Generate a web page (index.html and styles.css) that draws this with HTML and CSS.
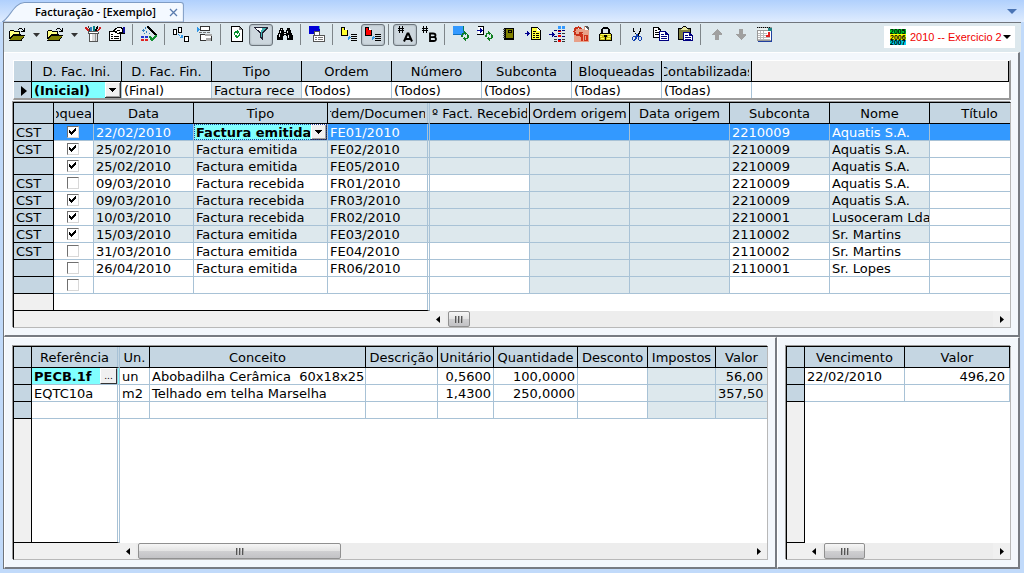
FILE: index.html
```html
<!DOCTYPE html>
<html lang="pt">
<head>
<meta charset="utf-8">
<title>Facturação - [Exemplo]</title>
<link rel="stylesheet" href="styles.css">
</head>
<body>
<header class="tabs">
  <div class="tab">
    <svg class="tab-shape" viewBox="0 0 180 20" preserveAspectRatio="none" aria-hidden="true"><path d="M0 20C7 17 12 1 22 .5H177Q179.500 .5 179.500 3V20z" fill="#f4f9ff" stroke="#7f9cc4"/></svg>
    <span class="tab-title">Facturação - [Exemplo]</span>
    <button class="tab-close" aria-label="Fechar"><svg width="9" height="9" viewBox="0 0 9 9"><path d="M1 1l7 7M8 1L1 8" stroke="#5a7cae" stroke-width="1.300"/></svg></button>
  </div>
  <button class="tab-menu" aria-label="Janelas"><svg width="10" height="5" viewBox="0 0 10 5"><path d="M0 0h10L5 5z" fill="#4a74b4"/></svg></button>
</header>
<main class="frame">
  <div class="toolbar" role="toolbar">
    <button class="tool" aria-label="Abrir"><svg class="icon" viewBox="0 0 16 16"><path d="M0 5h1V4h4v1h6v3h1v1h-8v1H3v1H2v1H1v1H0z" fill="#000"/><path d="M1 5h4v1h5v2H4v1H3v1H2v1H1z" fill="#ffff80"/><path d="M4 9h12v1h-1v2h-1v1h-1v2H0v-1h1v-2h1v-1h1v-1h1z" fill="#000"/><path d="M4 10h11l-3 4H1z" fill="#808000"/><path d="M9 4V3h1V2h3v1h1v1h1V2h1v4h-4V5h2V4h-1V3h-3v1z" fill="#000"/></svg></button>
    <button class="drop" aria-label="Opções de abrir"><svg width="7" height="4" viewBox="0 0 7 4"><path d="M0 0h7L3.500 4z" fill="#333"/></svg></button>
    <button class="tool" aria-label="Abrir obra"><svg class="icon" viewBox="0 0 16 16"><path d="M0 5h1V4h4v1h6v3h1v1h-8v1H3v1H2v1H1v1H0z" fill="#000"/><path d="M1 5h4v1h5v2H4v1H3v1H2v1H1z" fill="#ffff80"/><path d="M4 9h12v1h-1v2h-1v1h-1v2H0v-1h1v-2h1v-1h1v-1h1z" fill="#000"/><path d="M4 10h11l-3 4H1z" fill="#808000"/><path d="M9 4V3h1V2h3v1h1v1h1V2h1v4h-4V5h2V4h-1V3h-3v1z" fill="#000"/></svg></button>
    <button class="drop" aria-label="Opções de obra"><svg width="7" height="4" viewBox="0 0 7 4"><path d="M0 0h7L3.500 4z" fill="#333"/></svg></button>
    <button class="tool" aria-label="Configuração"><svg class="icon" viewBox="0 0 16 16"><path d="M0 1h2v1h1v1h1v2H2V4H1V3H0z" fill="#d02020"/><path d="M3 0h1v2h1v3H4V2H3z" fill="#333"/><path d="M5 1h2v4H5z" fill="#3080c0"/><path d="M8 0h2v5H8z" fill="#008080"/><path d="M11 1h1V0h1v3h-1v2h-2V3h1z" fill="#000"/><path d="M14 1h2v2h-1v1h-1v1h-2V4h1V3h1z" fill="#d02020"/><path d="M3 5h10v1h1v2h-1v8H4V8H3z" fill="#555"/><path d="M4 6h9v1H4z" fill="#fff"/><path d="M5 8h7v7H5z" fill="#ddd"/><path d="M5 8h2v7H5z" fill="#fff"/><path d="M10 8h1v7h-1z" fill="#999"/></svg></button>
    <button class="tool" aria-label="Propriedades"><svg class="icon" viewBox="0 0 16 16"><path d="M0 5h12v10H0z" fill="#000"/><path d="M1 6h10v8H1z" fill="#fff"/><path d="M2 8h2v1H2zM2 10h2v1H2zM2 12h2v1H2zM5 10h5v1H5zM5 12h5v1H5z" fill="#000"/><path d="M5 3h1V2h2V1h5v1h3v6h-4V7h-1v1H8V7H6V6H4V4h1z" fill="#000"/><path d="M6 4h1V3h1V2h4v1h1v3h-3v1H8V5H6z" fill="#fff"/><path d="M8 4h3v1H8z" fill="#000"/><path d="M14 1h2v6h-2z" fill="#1010a0"/></svg></button>
    <span class="sep"></span>
    <button class="tool" aria-label="Assistente"><svg class="icon" viewBox="0 0 16 16"><path d="M6 0h2v1h1v1h1v1h1v1h1v1h1v1h1v1h1v1h1v2h-2V9h-1V8h-1V7h-1V6h-1V5H9V4H8V3H7V2H6z" fill="#000"/><path d="M1 4h3v1H1zM2 3h1v3H2zM4 1h1v2H4zM5 5h1v2H5zM3 7h1v1H3zM8 7h1v1H8z" fill="#3080c0"/><path d="M0 10h3v2H0zM4 10h3v2H4z" fill="#2030d0"/><path d="M0 13h3v2H0zM4 13h3v2H4z" fill="#e02020"/><path d="M8 10h2v1h1v1h1v-1h1v-1h1V9h2v2h-1v1h-1v1h-1v1h-1v1h-2v-1H9v-2H8z" fill="#109030"/></svg></button>
    <span class="sep"></span>
    <button class="tool" aria-label="Sequência"><svg class="icon" viewBox="0 0 16 16"><path d="M0 3h4v6H0zM5 1h4v6H5zM11 10h5v6h-5z" fill="#000"/><path d="M1 4h2v4H1zM6 2h2v4H6zM12 11h3v4h-3z" fill="#fff"/><path d="M5 8h1v1H5zM6 9h1v1H6zM7 10h1v-1h2v3H7v-1h1z" fill="#3098e8"/></svg></button>
    <button class="tool" aria-label="Inserir"><svg class="icon" viewBox="0 0 16 16"><path d="M3 0h10v5H3zM3 8h12v7H3z" fill="#333"/><path d="M4 1h8v3H4zM4 9h10v5H4z" fill="#fff"/><path d="M0 1h1v1h1v1h1v1H2v1H1v1H0z" fill="#3098e8"/><path d="M2 6h3v1H2zM6 6h3v1H6zM10 6h3v1h-3z" fill="#777"/><path d="M8 8h7v2H8zM9 12h5v3H9z" fill="#aaa"/></svg></button>
    <span class="sep"></span>
    <button class="tool" aria-label="Actualizar"><svg class="icon" viewBox="0 0 16 16"><path d="M2 0h9v1h1v1h1v1h1v13H2z" fill="#000"/><path d="M3 1h7v3h3v11H3z" fill="#fff"/><path d="M10 1v3h3V3h-1V2h-1V1z" fill="#888"/><path d="M5 6h1V5h2V4h1v1h1v2H9v1H8V7H6v2H5zM10 7h1v3h-1v1H9v1H7v-1H6V9h2v1h1V9h1z" fill="#089030"/></svg></button>
    <button class="tool pressed" aria-label="Filtrar" aria-pressed="true"><svg class="icon" viewBox="0 0 16 16"><path d="M1 1h14v2h-1v1h-1v1h-1v1h-1v1h-1v7H9v-1H8v-1H7V7H6V6H5V5H4V4H3V3H2V2H1z" fill="#223"/><path d="M3 2h10v1h-1v1h-1v1h-1v1H7V5H6V4H4V3H3z" fill="#fff"/><path d="M9 2h4v1h-1v1h-1v1h-1v1H8V4h1zM8 6h1v5H8z" fill="#40b0b0"/></svg></button>
    <button class="tool" aria-label="Procurar"><svg class="icon" viewBox="0 0 16 16"><path d="M3 2h3v2h1v2h2V4h1V2h3v2h1v3h1v2h1v5h-6v-4H9V9H7v1H6v4H0V9h1V7h1V4h1z" fill="#000"/><path d="M3 5h1v2H3zM2 8h1v3H2zM4 3h1v1H4zM10 5h1v2h-1zM11 9h1v3h-1zM7 7h2v1H7z" fill="#eee"/></svg></button>
    <span class="sep"></span>
    <button class="tool" aria-label="Copiar janela"><svg class="icon" viewBox="0 0 16 16"><path d="M0 0h11v8H0z" fill="#0000d8"/><path d="M10 0h1v3h-1z" fill="#40b0c0"/><path d="M5 5h6v5H5zM4 9h12v7H4z" fill="#555"/><path d="M6 6h4v3H6zM5 10h10v5H5z" fill="#fff"/><path d="M6 11h2v1H6zM6 13h2v1H6zM9 11h5v1H9zM9 13h5v1H9z" fill="#777"/></svg></button>
    <span class="sep"></span>
    <button class="tool" aria-label="Marcar amarelo"><svg class="icon" viewBox="0 0 16 16"><path d="M0 1h4v1h1v1h1v1h1v6H0z" fill="#000"/><path d="M1 2h2v2h3v5H1z" fill="#ffff30"/><path d="M4 2v2h2V3H5V2z" fill="#fff"/><path d="M7 11h1v-1h1v1h1v1H9v1H8v1H7z" fill="#3098e8"/><path d="M10 8h6v1h-6zM10 10h6v1h-6zM10 12h6v1h-6zM10 14h6v1h-6z" fill="#000"/></svg></button>
    <button class="tool pressed" aria-label="Marcar vermelho" aria-pressed="true"><svg class="icon" viewBox="0 0 16 16"><path d="M0 1h4v1h1v1h1v1h1v6H0z" fill="#000"/><path d="M1 2h2v2h3v5H1z" fill="#ff0000"/><path d="M4 2v2h2V3H5V2z" fill="#fff"/><path d="M7 11h1v-1h1v1h1v1H9v1H8v1H7z" fill="#3098e8"/><path d="M10 8h6v1h-6zM10 10h6v1h-6zM10 12h6v1h-6zM10 14h6v1h-6z" fill="#000"/></svg></button>
    <span class="sep"></span>
    <button class="tool pressed" aria-label="Numeração A" aria-pressed="true"><svg class="icon" viewBox="0 0 16 16"><path d="M2 0h1v7H2zM5 0h1v7H5zM1 2h6v1H1zM1 4h6v1H1z" fill="#000"/><path d="M7 15.500L10.500 7.500h1L15 15.500M8 13h6" fill="none" stroke="#000" stroke-width="2" shape-rendering="auto"/></svg></button>
    <button class="tool" aria-label="Numeração B"><svg class="icon" viewBox="0 0 16 16"><path d="M2 0h1v7H2zM5 0h1v7H5zM1 2h6v1H1zM1 4h6v1H1z" fill="#000"/><path d="M9 15V7.500h3q2.500 0 2.500 1.800t-2.500 1.800h-3 3.500q2.500 0 2.500 2t-2.500 1.900z" fill="none" stroke="#000" stroke-width="1.800" shape-rendering="auto"/></svg></button>
    <span class="sep"></span>
    <button class="tool" aria-label="Actualizar vista"><svg class="icon" viewBox="0 0 16 16"><path d="M0 0h11v9H0z" fill="#1070c0"/><path d="M0 0h10v8H0z" fill="#3399ff"/><path d="M10 0h1v5h-1z" fill="#008060"/><path d="M8 9h1V7h2V5h1v1h1v1h1v1h-1v1h-1V8h-2v3H8zM14 8h1v1h1v3h-1v1h-2v2h-1v-1h-1v-1h-1v-1h1v-1h1v1h2z" fill="#108020"/></svg></button>
    <button class="tool" aria-label="Importar"><svg class="icon" viewBox="0 0 16 16"><path d="M1 0h6v9H0V8h6V1H1z" fill="#000"/><path d="M1 1h5v7H1z" fill="#fff"/><path d="M0 4h3V2h1v1h1v1h1v1H5v1H4v1H3V5H0z" fill="#000090"/><path d="M8 9h1V7h2V5h1v1h1v1h1v1h-1v1h-1V8h-2v3H8zM14 8h1v1h1v3h-1v1h-2v2h-1v-1h-1v-1h-1v-1h1v-1h1v1h2z" fill="#108020"/></svg></button>
    <button class="tool" aria-label="Diário"><svg class="icon" viewBox="0 0 16 16"><path d="M3 2h10v12H3z" fill="#000"/><path d="M5 3h7v9H5z" fill="#808000"/><path d="M7 4h4v3H7z" fill="#000"/><path d="M8 5h2v1H8z" fill="#808000"/><path d="M2 3h2v1H2zM2 5h2v1H2zM2 7h2v1H2zM2 9h2v1H2zM2 11h2v1H2z" fill="#555"/></svg></button>
    <button class="tool" aria-label="Inserir documento"><svg class="icon" viewBox="0 0 16 16"><path d="M6 1h7v1h1v1h1v1h1v10H6z" fill="#000"/><path d="M7 2h5v3h3v8H7z" fill="#ffff40"/><path d="M12 2v3h3V4h-1V3h-1V2z" fill="#fff"/><path d="M8 5h3v1H8zM8 7h2v1H8zM11 7h3v1h-3zM8 9h2v1H8zM11 9h3v1h-3zM8 11h2v1H8zM11 11h3v1h-3z" fill="#000"/><path d="M0 7h2V5h1v1h1v1h1v1H4v1H3v1H2V8H0z" fill="#000090"/></svg></button>
    <button class="tool" aria-label="Inserir lista"><svg class="icon" viewBox="0 0 16 16"><path d="M9 0h3v3H9zM13 0h3v3h-3z" fill="#3399ff"/><path d="M5 4h3v1H5zM9 4h3v1H9zM13 4h3v1h-3zM5 10h3v1H5zM9 7h3v1H9zM13 10h3v1h-3zM9 13h3v1H9z" fill="#000070"/><path d="M9 5h3v1H9zM9 9h3v2H9zM9 14h3v2H9z" fill="#f00000"/><path d="M13 7h3v1h-3zM13 13h3v1h-3zM5 13h3v1H5zM13 15h3v1h-3zM5 15h3v1H5z" fill="#333"/><path d="M0 8h3V6h1v1h1v1h1v1H5v1H4v1H3V9H0z" fill="#000090"/></svg></button>
    <button class="tool" aria-label="Gestor"><svg class="icon" viewBox="0 0 16 16" shape-rendering="auto"><path d="M2 3h9V0l5 4v12H1V9z" fill="#e8a088"/><path d="M12 0h2l2 2v2h-4z" fill="#555"/><path d="M12 1l3 3h-3z" fill="#fff"/><path d="M8.500 3C7 .5 1.500 1 1.500 5.500S7 10 8.500 6.500H5.500" fill="none" stroke="#c83018" stroke-width="2"/><path d="M7 10l2-1v6M11.500 9.500h2.500v5h-2.500z" fill="none" stroke="#d03018" stroke-width="1.500"/></svg></button>
    <button class="tool" aria-label="Bloquear"><svg class="icon" viewBox="0 0 16 16"><path d="M5 2h1V1h5v1h1v1h1v4h1v1h1v7H2V8h1V7h1V3h1z" fill="#000"/><path d="M6 3h5v4H6z" fill="#dde8ed"/><path d="M3 8h11v6H3z" fill="#c8c010"/><path d="M4 8h9v1H4zM3 10h2v1H3zM11 10h3v1h-3zM4 12h3v1H4zM10 12h3v1h-3z" fill="#ffff60"/><path d="M7 9h3v2H9v3H8v-3H7z" fill="#000"/></svg></button>
    <span class="sep"></span>
    <button class="tool" aria-label="Cortar"><svg class="icon" viewBox="0 0 16 16"><path d="M4 2h1v3h1v2h1v1h2V7h1V5h1V2h1v4h-1v2h-1v2H7V8H6V6H4z" fill="#000"/><path d="M7 8h2v2h3v1h1v3h-1v1h-2v-1H9v-3H8v2H7v1H6v1H4v-1H3v-3h1v-1h3zM5 11H4v3h1v-1h1v-2zM10 11v3h2v-3z" fill="#1040b0" fill-rule="evenodd"/></svg></button>
    <button class="tool" aria-label="Copiar"><svg class="icon" viewBox="0 0 16 16"><path d="M0 1h6v1h1v1h1v9H0z" fill="#000"/><path d="M1 2h4v2h2v7H1z" fill="#fff"/><path d="M2 4h2v1H2zM2 6h4v1H2zM2 8h4v1H2z" fill="#000"/><path d="M6 5h7v1h1v1h1v1h1v7H6z" fill="#000080"/><path d="M7 6h5v3h3v5H7z" fill="#fff"/><path d="M8 8h3v1H8zM8 10h6v1H8zM8 12h6v1H8z" fill="#000080"/></svg></button>
    <button class="tool" aria-label="Colar"><svg class="icon" viewBox="0 0 16 16"><path d="M1 2h4V1h1V0h3v1h1v1h4v12H1z" fill="#000"/><path d="M2 3h11v10H2z" fill="#808040"/><path d="M5 3V2h1V1h3v1h1v1h1v1H4V3z" fill="#e8e8a0"/><path d="M6 6h7v1h1v1h1v1h1v6H6z" fill="#000080"/><path d="M7 7h5v3h3v4H7z" fill="#fff"/><path d="M8 9h3v1H8zM8 11h6v1H8zM8 13h6v1H8z" fill="#000080"/></svg></button>
    <span class="sep"></span>
    <button class="tool" aria-label="Subir" disabled><svg class="icon" viewBox="0 0 16 16"><path d="M8 3l5 5v1h-3v5H6V9H3V8z" fill="#a0a0a0"/></svg></button>
    <button class="tool" aria-label="Descer" disabled><svg class="icon" viewBox="0 0 16 16"><path d="M8 14l5-5V8h-3V3H6v5H3v1z" fill="#a0a0a0"/></svg></button>
    <button class="tool" aria-label="Calendário"><svg class="icon" viewBox="0 0 16 16"><path d="M0 1h15v14H0z" fill="#999"/><path d="M1 5h13v9H1z" fill="#fff"/><path d="M0 1h1v1H0zM2 1h1v1H2zM4 1h1v1H4zM6 1h1v1H6zM8 1h1v1H8zM10 1h1v1h-1zM12 1h1v1h-1z" fill="#000"/><path d="M0 2h14v2H0z" fill="#e8f0f0"/><path d="M11 2h4v3h-4z" fill="#208080"/><path d="M14 5h1v10h-1zM1 15h14v1H1z" fill="#2040a0"/><path d="M1 7h9v1H1zM1 9h8v1H1zM1 11h12v1H1zM1 13h12v1H1zM3 5h1v9H3zM6 5h1v9H6z" fill="#bbb"/><path d="M11 6h2v5H9V9h2z" fill="#e02020"/></svg></button>
    <label class="year">
      <svg width="16" height="16" viewBox="0 0 16 16" aria-hidden="true"><path d="M0 0h16v5H0z" fill="#00e030"/><path d="M0 5h16v6H0z" fill="#ffff00"/><path d="M0 11h16v5H0z" fill="#00d8f0"/><text class="year-mark" x="0" y="5">2005</text><text class="year-mark" x="0" y="11">2006</text><text class="year-mark" x="0" y="16">2007</text></svg>
      <select class="year-select" aria-label="Exercício"><option>2010 -- Exercicio 2</option></select>
    </label>
  </div>

  <section class="panel upper">
    <div class="filter">
      <table class="grid">
        <colgroup><col class="w18"><col class="w90"><col class="w90"><col class="w90"><col class="w90"><col class="w90"><col class="w90"><col class="w90"><col class="w90"><col></colgroup>
        <thead><tr><th></th><th><span>D. Fac. Ini.</span></th><th><span>D. Fac. Fin.</span></th><th><span>Tipo</span></th><th><span>Ordem</span></th><th><span>Número</span></th><th><span>Subconta</span></th><th><span>Bloqueadas</span></th><th><span>Contabilizadas</span></th><th class="blank"></th></tr></thead>
        <tbody><tr><th class="marker"><svg width="6" height="10" viewBox="0 0 6 10"><path d="M0 0l6 5-6 5z"/></svg></th><td class="editing"><select class="cell-select" aria-label="D. Fac. Ini."><option>(Inicial)</option></select></td><td>(Final)</td><td class="ro">Factura rece</td><td>(Todos)</td><td>(Todos)</td><td>(Todos)</td><td>(Todas)</td><td>(Todas)</td><td class="bare"></td></tr></tbody>
      </table>
    </div>
    <div class="sunken">
      <div class="viewport">
      <table class="grid main-grid">
        <colgroup><col class="w40"><col class="w40"><col class="w100"><col class="w134"><col class="w102"><col class="w100"><col class="w100"><col class="w100"><col class="w100"><col class="w100"><col class="w100"></colgroup>
        <thead><tr><th></th><th><span>Bloqueada</span></th><th><span>Data</span></th><th><span>Tipo</span></th><th class="split"><span>Ordem/Documento</span></th><th><span>Nº Fact. Recebida</span></th><th><span>Ordem origem</span></th><th><span>Data origem</span></th><th><span>Subconta</span></th><th><span>Nome</span></th><th><span>Título</span></th></tr></thead>
        <tbody>
        <tr class="locked selected"><th>CST</th><td class="tick"><input type="checkbox" checked aria-label="Bloqueada"></td><td>22/02/2010</td><td class="editing"><select class="cell-select" aria-label="Tipo"><option>Factura emitida</option></select></td><td class="split">FE01/2010</td><td></td><td class="ro"></td><td class="ro"></td><td>2210009</td><td>Aquatis S.A.</td><td></td></tr>
        <tr class="locked"><th>CST</th><td class="tick"><input type="checkbox" checked aria-label="Bloqueada"></td><td>25/02/2010</td><td>Factura emitida</td><td class="split">FE02/2010</td><td></td><td class="ro"></td><td class="ro"></td><td>2210009</td><td>Aquatis S.A.</td><td></td></tr>
        <tr class="locked"><th></th><td class="tick"><input type="checkbox" checked aria-label="Bloqueada"></td><td>25/02/2010</td><td>Factura emitida</td><td class="split">FE05/2010</td><td></td><td class="ro"></td><td class="ro"></td><td>2210009</td><td>Aquatis S.A.</td><td></td></tr>
        <tr><th>CST</th><td class="tick"><input type="checkbox" aria-label="Bloqueada"></td><td>09/03/2010</td><td>Factura recebida</td><td class="split">FR01/2010</td><td></td><td class="ro"></td><td class="ro"></td><td>2210009</td><td>Aquatis S.A.</td><td></td></tr>
        <tr class="locked"><th>CST</th><td class="tick"><input type="checkbox" checked aria-label="Bloqueada"></td><td>09/03/2010</td><td>Factura recebida</td><td class="split">FR03/2010</td><td></td><td class="ro"></td><td class="ro"></td><td>2210009</td><td>Aquatis S.A.</td><td></td></tr>
        <tr class="locked"><th>CST</th><td class="tick"><input type="checkbox" checked aria-label="Bloqueada"></td><td>10/03/2010</td><td>Factura recebida</td><td class="split">FR02/2010</td><td></td><td class="ro"></td><td class="ro"></td><td>2210001</td><td>Lusoceram Lda</td><td></td></tr>
        <tr class="locked"><th>CST</th><td class="tick"><input type="checkbox" checked aria-label="Bloqueada"></td><td>15/03/2010</td><td>Factura emitida</td><td class="split">FE03/2010</td><td></td><td class="ro"></td><td class="ro"></td><td>2110002</td><td>Sr. Martins</td><td></td></tr>
        <tr><th>CST</th><td class="tick"><input type="checkbox" aria-label="Bloqueada"></td><td>31/03/2010</td><td>Factura emitida</td><td class="split">FE04/2010</td><td></td><td class="ro"></td><td class="ro"></td><td>2110002</td><td>Sr. Martins</td><td></td></tr>
        <tr><th></th><td class="tick"><input type="checkbox" aria-label="Bloqueada"></td><td>26/04/2010</td><td>Factura emitida</td><td class="split">FR06/2010</td><td></td><td class="ro"></td><td class="ro"></td><td>2110001</td><td>Sr. Lopes</td><td></td></tr>
        <tr><th></th><td class="tick"><input type="checkbox" aria-label="Bloqueada"></td><td></td><td></td><td class="split"></td><td></td><td class="ro"></td><td class="ro"></td><td></td><td></td><td></td></tr>
        <tr class="filler short"><th></th><td class="edge" colspan="3"></td><td class="split edge"></td><td class="bare" colspan="6"></td></tr>
        </tbody>
      </table>
      </div>
      <div class="scroll">
        <span class="scroll-base base-main"></span>
        <button class="arrow" aria-label="Esquerda"><svg width="4" height="7" viewBox="0 0 4 7"><path d="M4 0v7L0 3.500z"/></svg></button>
        <span class="track"><span class="thumb thumb-s"><i></i></span></span>
        <button class="arrow" aria-label="Direita"><svg width="4" height="7" viewBox="0 0 4 7"><path d="M0 0v7l4-3.500z"/></svg></button>
      </div>
    </div>
  </section>

  <div class="lower">
    <section class="panel">
      <div class="sunken">
        <div class="viewport">
        <table class="grid tall">
          <colgroup><col class="w18"><col class="w88"><col class="w30"><col class="w216"><col class="w72"><col class="w56"><col class="w84"><col class="w70"><col class="w68"><col></colgroup>
          <thead><tr><th></th><th class="split"><span>Referência</span></th><th><span>Un.</span></th><th><span>Conceito</span></th><th><span>Descrição</span></th><th><span>Unitário</span></th><th><span>Quantidade</span></th><th><span>Desconto</span></th><th><span>Impostos</span></th><th class="last"><span>Valor</span></th></tr></thead>
          <tbody>
          <tr><th></th><td class="split editing"><div class="lookup"><input class="cell-input" type="text" value="PECB.1f" aria-label="Referência"><button class="more" aria-label="Escolher">...</button></div></td><td>un</td><td class="pre">Abobadilha Cerâmica  60x18x25</td><td></td><td class="num">0,5600</td><td class="num">100,0000</td><td></td><td class="ro"></td><td class="ro num last">56,00</td></tr>
          <tr><th></th><td class="split">EQTC10a</td><td>m2</td><td>Telhado em telha Marselha</td><td></td><td class="num">1,4300</td><td class="num">250,0000</td><td></td><td class="ro"></td><td class="ro num last">357,50</td></tr>
          <tr><th></th><td class="split"></td><td></td><td></td><td></td><td></td><td></td><td></td><td class="ro"></td><td class="ro last"></td></tr>
          <tr class="filler"><th></th><td class="split edge"></td><td class="bare" colspan="8"></td></tr>
          </tbody>
        </table>
        </div>
        <div class="scroll">
          <span class="scroll-base base-detail"></span>
          <button class="arrow" aria-label="Esquerda"><svg width="4" height="7" viewBox="0 0 4 7"><path d="M4 0v7L0 3.500z"/></svg></button>
          <span class="track"><span class="thumb thumb-l"><i></i></span></span>
          <button class="arrow" aria-label="Direita"><svg width="4" height="7" viewBox="0 0 4 7"><path d="M0 0v7l4-3.500z"/></svg></button>
        </div>
      </div>
    </section>
    <section class="panel">
      <div class="sunken">
        <div class="viewport">
        <table class="grid tall">
          <colgroup><col class="w18"><col class="w100"><col></colgroup>
          <thead><tr><th></th><th><span>Vencimento</span></th><th><span>Valor</span></th></tr></thead>
          <tbody>
          <tr><th></th><td>22/02/2010</td><td class="num wide">496,20</td></tr>
          <tr><th></th><td></td><td></td></tr>
          <tr class="filler"><th></th><td class="bare" colspan="2"></td></tr>
          </tbody>
        </table>
        </div>
        <div class="scroll">
          <span class="scroll-base base-due"></span>
          <button class="arrow" aria-label="Esquerda"><svg width="4" height="7" viewBox="0 0 4 7"><path d="M4 0v7L0 3.500z"/></svg></button>
          <span class="track"><span class="thumb thumb-m"><i></i></span></span>
          <button class="arrow" aria-label="Direita"><svg width="4" height="7" viewBox="0 0 4 7"><path d="M0 0v7l4-3.500z"/></svg></button>
        </div>
      </div>
    </section>
  </div>
</main>
</body>
</html>
```
FILE: styles.css
```css
* { box-sizing: border-box; }
body {
  margin: 0;
  height: 100vh;
  display: flex;
  flex-direction: column;
  padding: 0 3px 4px;
  overflow: hidden;
  background: #c1dafa;
  font: 13px/16px "DejaVu Sans", Verdana, sans-serif;
  color: #000;
}
button { border: 0; padding: 0; margin: 0; background: none; font: inherit; color: inherit; }

/* window tabs */
.tabs {
  flex: none;
  display: flex;
  justify-content: space-between;
  align-items: flex-end;
  height: 22px;
  margin: 0 -3px;
  padding: 0 7px 0 2px;
  background: linear-gradient(#b0d0fd, #dfecfe);
}
.tab {
  position: relative;
  display: flex;
  align-items: center;
  gap: 13px;
  height: 20px;
  padding: 0 6px 0 33px;
}
.tab-shape { position: absolute; inset: 0; width: 100%; height: 100%; }
.tab-title {
  position: relative;
  font: 600 11px/18px "Open Sans", "Noto Sans", sans-serif;
  white-space: nowrap;
}
.tab-close { position: relative; display: flex; }
.tab-menu { display: flex; align-self: center; }

/* frame and toolbar */
.frame {
  flex: 1;
  min-height: 0;
  display: flex;
  flex-direction: column;
  border: 1px solid #70757c;
  border-width: 1px 0 0 1px;
}
.toolbar {
  flex: none;
  display: flex;
  height: 29px;
  padding: 1px 6px 0 1px;
  background: #dde8ed;
}
.tool {
  flex: none;
  display: flex;
  justify-content: center;
  width: 24px;
  height: 22px;
  padding-top: 1px;
  border: 1px solid transparent;
}
.pressed { border: 1px solid #6c757c; border-radius: 3px; background: #cdd7de; box-shadow: inset 0 0 2px #8c979f; }
.icon { width: 16px; height: 16px; flex: none; shape-rendering: crispEdges; }
.drop { flex: none; width: 14px; height: 22px; display: flex; align-items: center; justify-content: center; }
.sep { flex: none; width: 8px; height: 21px; padding-left: 3px; }
.sep::before { content: ""; display: block; width: 1px; height: 21px; background: #7e8589; }
.year {
  display: flex;
  align-items: center;
  gap: 4px;
  width: 131px;
  height: 22px;
  margin: 2px 0 0 auto;
  padding-left: 6px;
  background: #fff;
}
.year svg { flex: none; }
.year-mark { font: bold 7px "Liberation Sans", sans-serif; }
.year-select {
  flex: 1;
  min-width: 0;
  height: 20px;
  padding: 0 13px 0 0;
  border: 0;
  appearance: none;
  color: #f00000;
  font: 11px "Liberation Sans", sans-serif;
  text-overflow: clip;
  background: url("data:image/svg+xml,%3Csvg xmlns='http://www.w3.org/2000/svg' width='8' height='4'%3E%3Cpath d='M0 0h8L4 4z'/%3E%3C/svg%3E") no-repeat right 4px center;
}

/* panels */
.panel {
  display: flex;
  flex-direction: column;
  min-width: 0;
  min-height: 0;
  padding: 8px 7px 7px 8px;
  background: #f3f7fc;
  border: 1px solid #fff;
  border-right: 2px solid #777b82;
  border-bottom: 2px solid #777b82;
}
.frame > .panel, .lower { margin-right: 1px; }
.upper { flex: none; padding-top: 7px; }
.lower {
  flex: 1;
  min-height: 0;
  display: grid;
  grid-template-columns: minmax(0, 1fr) 243px;
  grid-template-rows: minmax(0, 1fr);
}
.filter {
  margin-bottom: 2px;
  background: #fff;
  border: 1px solid #fff;
  border-right: 2px solid #999;
  border-bottom: 2px solid #999;
}
.sunken {
  flex: 1;
  min-height: 0;
  display: flex;
  flex-direction: column;
  background: #fff;
  border: 1px solid #000;
  border-right-color: #b8b8b8;
  border-bottom-color: #b8b8b8;
  box-shadow: -1px -1px 0 #999;
}
.viewport { flex: 1; min-height: 0; overflow: hidden; }

/* grids */
.grid { table-layout: fixed; width: 100%; border-collapse: separate; border-spacing: 0; }
.main-grid { width: 1016px; }
.tall { height: 100%; }
.w18 { width: 18px; } .w30 { width: 30px; } .w40 { width: 40px; }
.w56 { width: 56px; } .w68 { width: 68px; } .w70 { width: 70px; }
.w72 { width: 72px; } .w84 { width: 84px; } .w88 { width: 88px; }
.w90 { width: 90px; } .w100 { width: 100px; } .w102 { width: 102px; }
.w134 { width: 134px; } .w216 { width: 216px; }
.grid th, .grid td {
  height: 17px;
  padding: 2px 2px 0;
  overflow: hidden;
  white-space: nowrap;
  text-align: left;
  vertical-align: middle;
  font-weight: normal;
  line-height: 14px;
}
.grid th { background: #c5d6e2; border: 1px solid #000; border-width: 0 1px 1px 0; }
.grid thead th { height: 21px; padding: 2px 2px 0; line-height: 16px; }
.grid thead span { display: flex; justify-content: center; overflow: hidden; }
.grid td { border: 1px solid #a8c2d6; border-width: 0 1px 1px 0; }
.grid .split { border-right: 3px double #a8c2d6; }
.grid .last { border-right: 0; }
.grid .ro, .locked td { background: #dde8ed; }
.locked td:last-child, .locked .tick { background: #fff; }
.grid .num { text-align: right; }
.grid .last.num, .grid .wide { padding-right: 4px; }
.grid .pre { white-space: pre; }
.grid .tick { padding: 0 2px 0 0; }
.grid thead .blank { background: #f0f0f0; }
.grid .bare { border: 0; background: #fff; }
.filter .marker { padding-left: 7px; }
.filter tbody th, .filter td { height: 16px; border-bottom: 0; }
.marker svg { display: block; }
.grid .selected td { background: #3399ff; color: #fff; }
.grid .editing, .grid .selected .editing { padding: 0; background: #80ffff; color: #000; }
.filler th { height: auto; background: #f0f0f0; }
.filler td { height: auto; }
.short th, .short td { height: 17px; }
.filler .edge { border-bottom-color: #000; }
.filler .edge:not(.split) { border-right: 0; }

input[type="checkbox"] {
  appearance: none;
  display: block;
  width: 12px;
  height: 12px;
  margin: 0 auto 1px;
  border: 1px solid #707070;
  border-right-color: #d8d8d8;
  border-bottom-color: #d8d8d8;
  background: #fff;
}
input[type="checkbox"]:checked {
  background: #fff url("data:image/svg+xml,%3Csvg xmlns='http://www.w3.org/2000/svg' width='7' height='7'%3E%3Cpath d='M0 2h1v1h1v1h1V3h1V2h1V1h1V0h1v3H6v1H5v1H4v1H3v1H2V6H1V5H0z'/%3E%3C/svg%3E") no-repeat center;
}
.cell-select {
  appearance: none;
  display: block;
  width: 100%;
  height: 16px;
  padding: 1px 17px 0 2px;
  border: 0;
  border-radius: 0;
  color: #000;
  font: bold 13px/15px "DejaVu Sans", Verdana, sans-serif;
  text-overflow: clip;
  background: #80ffff url("data:image/svg+xml,%3Csvg xmlns='http://www.w3.org/2000/svg' width='16' height='16'%3E%3Cpath fill='%23333' d='M0 0h16v16H0z'/%3E%3Cpath fill='%23fff' d='M0 0h15v15H0z'/%3E%3Cpath fill='%23a0a0a0' d='M1 14h13V1h1v14H1z'/%3E%3Cpath fill='%23f0f0f0' d='M1 1h13v13H1z'/%3E%3Cpath d='M4 6h7v1h-1v1H9v1H8v1H7V9H6V8H5V7H4z'/%3E%3C/svg%3E") no-repeat right center;
}
.selected .cell-select { outline: 1px dotted #2040a0; outline-offset: -1px; }
.lookup { display: flex; height: 16px; }
.cell-input {
  flex: 1;
  min-width: 0;
  padding: 1px 2px 0;
  border: 0;
  background: #80ffff;
  font: bold 13px/15px "DejaVu Sans", Verdana, sans-serif;
}
.more {
  width: 17px;
  height: 16px;
  border: 1px solid #fff;
  border-right-color: #333;
  border-bottom-color: #333;
  background: #f0f0f0;
  font-size: 9px;
  line-height: 8px;
}

/* scroll bars */
.scroll { flex: none; display: flex; height: 16px; background: #ededed; }
.scroll-base { flex: none; background: #f0f0f0; }
.base-main { width: 415px; }
.base-detail { width: 105px; }
.base-due { width: 18px; }
.arrow { flex: none; width: 17px; display: flex; align-items: center; justify-content: center; background: #f0f0f0; }
.track { flex: 1; display: flex; min-width: 0; padding: 0 2px; }
.thumb {
  display: flex;
  align-items: center;
  justify-content: center;
  height: 16px;
  border: 1px solid #909090;
  border-radius: 2px;
  background: linear-gradient(#f6f6f6, #e4e4e4 48%, #cfcfd1 52%, #c2c2c5);
}
.thumb i { width: 8px; height: 7px; background: repeating-linear-gradient(90deg, #555 0 1px, #aaa 1px 2px, transparent 2px 3px); }
.thumb-s { width: 22px; }
.thumb-m { width: 41px; }
.thumb-l { width: 203px; }
```
